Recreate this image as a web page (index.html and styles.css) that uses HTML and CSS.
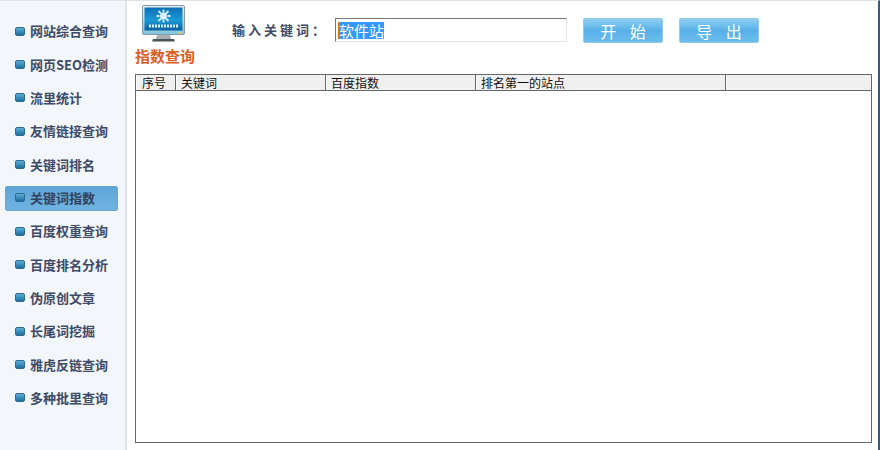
FILE: index.html
```html
<!DOCTYPE html>
<html lang="zh-CN">
<head>
<meta charset="utf-8">
<title>指数查询</title>
<link rel="stylesheet" href="styles.css">
</head>
<body>
<div class="app">
  <nav class="sidebar">
    <a class="nav-item"><i class="bullet"></i><span>网站综合查询</span></a>
    <a class="nav-item"><i class="bullet"></i><span>网页SEO检测</span></a>
    <a class="nav-item"><i class="bullet"></i><span>流里统计</span></a>
    <a class="nav-item"><i class="bullet"></i><span>友情链接查询</span></a>
    <a class="nav-item"><i class="bullet"></i><span>关键词排名</span></a>
    <a class="nav-item active"><i class="bullet"></i><span>关键词指数</span></a>
    <a class="nav-item"><i class="bullet"></i><span>百度权重查询</span></a>
    <a class="nav-item"><i class="bullet"></i><span>百度排名分析</span></a>
    <a class="nav-item"><i class="bullet"></i><span>伪原创文章</span></a>
    <a class="nav-item"><i class="bullet"></i><span>长尾词挖掘</span></a>
    <a class="nav-item"><i class="bullet"></i><span>雅虎反链查询</span></a>
    <a class="nav-item"><i class="bullet"></i><span>多种批里查询</span></a>
  </nav>
  <main class="content">
    <div class="toolbar">
      <svg class="monitor" width="46" height="38" viewBox="0 0 46 38">
        <defs>
          <linearGradient id="scr" x1="0" y1="0" x2="0" y2="1">
            <stop offset="0" stop-color="#0b6fb5"/>
            <stop offset="0.55" stop-color="#1a9ad6"/>
            <stop offset="1" stop-color="#0a5f9c"/>
          </linearGradient>
          <linearGradient id="body" x1="0" y1="0" x2="0" y2="1">
            <stop offset="0" stop-color="#e8f2f7"/>
            <stop offset="1" stop-color="#7fc4de"/>
          </linearGradient>
        </defs>
        <rect x="1.500" y="0.500" width="42" height="29" rx="1.500" fill="url(#body)" stroke="#8a9aa5"/>
        <rect x="3.500" y="2.500" width="38" height="23" fill="url(#scr)"/>
        <g stroke="#cfeefa" stroke-width="1.800">
          <path d="M22.500 4.500v3M22.500 14.500v3M15.500 11h3M26.500 11h3M17.500 6l2.500 2.500M25 13.500l2.500 2.500M27.500 6L25 8.500M20 13.500L17.500 16"/>
        </g>
        <circle cx="22.500" cy="11" r="3.500" fill="#d9f3fc"/>
        <path d="M8 21h29" stroke="#d4f0fb" stroke-width="3" stroke-dasharray="2 1"/>
        <rect x="37" y="27" width="4" height="1.500" fill="#d8d070"/>
        <path d="M16 30h13l1 4H15z" fill="#a8b0b5"/>
        <path d="M12 34h21l1 2.500H11z" fill="#4c5458"/>
      </svg>
      <label class="kw-label">输入关键词：</label>
      <div class="kw-input"><span class="caret"></span><span class="selected">软件站</span></div>
      <button class="btn">开 始</button>
      <button class="btn">导 出</button>
    </div>
    <h1 class="title">指数查询</h1>
    <section class="list">
      <div class="list-head">
        <div class="col col-1">序号</div>
        <div class="col col-2">关键词</div>
        <div class="col col-3">百度指数</div>
        <div class="col col-4">排名第一的站点</div>
        <div class="col col-5"></div>
      </div>
    </section>
  </main>
</div>
</body>
</html>
```
FILE: styles.css
```css
* { box-sizing: border-box; }
html, body { margin: 0; padding: 0; }
body {
  width: 880px;
  height: 450px;
  overflow: hidden;
  background: #fff;
  font-family: "Noto Sans CJK SC", "Liberation Sans", sans-serif;
}
.app {
  display: flex;
  height: 450px;
  border-top: 1px solid #dfe3e6;
  border-right: 2px solid #3d5a78;
}
.sidebar {
  width: 127px;
  flex: none;
  padding: 13px 0 0 5px;
  background: #f3f7fb;
  border-right: 2px solid #dde3e9;
  display: flex;
  flex-direction: column;
}
.nav-item {
  display: flex;
  align-items: center;
  width: 113px;
  height: 33.350px;
  flex: none;
  padding-left: 10px;
  font-size: 13px;
  font-weight: 700;
  color: #3d4a68;
  white-space: nowrap;
}
.nav-item span { margin-left: 5px; }
.bullet {
  width: 10px;
  height: 9px;
  margin-top: 1px;
  flex: none;
  border-radius: 2px;
  background: linear-gradient(#5aaed6, #1d6f9f);
  border: 1px solid #2c6a90;
}
.nav-item.active {
  position: relative;
  z-index: 0;
  color: #33425f;
}
.nav-item.active::before {
  content: "";
  position: absolute;
  z-index: -1;
  left: 0;
  right: 0;
  top: 5px;
  bottom: 3px;
  border-radius: 2px;
  background: linear-gradient(#5ea5d8, #6fb3e0);
  border: 1px solid #6aa8d2;
}
.content {
  flex: 1;
  min-width: 0;
  padding: 0 6px 7px 8px;
  display: flex;
  flex-direction: column;
}
.toolbar {
  height: 46px;
  flex: none;
  display: flex;
  align-items: flex-start;
}
.monitor {
  margin: 4px 0 0 6px;
  flex: none;
}
.kw-label {
  margin: 18px 0 0 45px;
  width: 103px;
  font-size: 13px;
  line-height: 22px;
  font-weight: 700;
  letter-spacing: 3px;
  color: #3d4a68;
  white-space: nowrap;
}
.kw-input {
  width: 232px;
  height: 24px;
  margin-top: 17px;
  display: flex;
  align-items: center;
  padding-left: 2px;
  background: #fff;
  border: 1px solid #e3e3e3;
  border-top-color: #777;
  border-left-color: #777;
}
.caret {
  width: 1px;
  height: 17px;
  background: #d9730f;
}
.selected {
  background: #3399ff;
  color: #fff;
  font-size: 15px;
  line-height: 17px;
  height: 17px;
  font-weight: 400;
}
.btn {
  width: 80px;
  height: 25px;
  margin: 17px 0 0 16px;
  padding: 0;
  border: 1px solid #8fcbe6;
  border-radius: 2px;
  background: linear-gradient(#8fd0f0, #58b0e8 50%, #6cbcec);
  color: #fff;
  font-family: "Noto Sans CJK SC", sans-serif;
  font-size: 16px;
  font-weight: 400;
  word-spacing: 10px;
}
.title {
  margin: 0;
  height: 27px;
  flex: none;
  font-size: 15px;
  line-height: 18px;
  font-weight: 700;
  color: #d9601f;
}
.list {
  flex: 1;
  border: 1px solid #666;
  background: #fff;
}
.list-head {
  display: flex;
  height: 16px;
  background: #f0f0f0;
  border-bottom: 1px solid #666;
}
.col {
  height: 15px;
  overflow: visible;
  padding-left: 5px;
  font-size: 12px;
  line-height: 16px;
  color: #111;
  border-right: 1px solid #666;
  box-shadow: inset 1px 0 0 #fff;
}
.col-1 { width: 40px; padding-left: 6px; }
.col-2 { width: 150px; }
.col-3 { width: 150px; }
.col-4 { width: 250px; }
.col-5 { flex: 1; border-right: 0; }
```
